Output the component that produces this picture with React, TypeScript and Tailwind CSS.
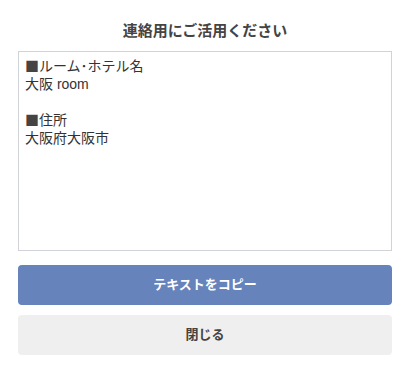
const Mark = () => (
  <span className="leading-none [font-family:'Noto_Sans_CJK_JP',sans-serif] text-[#444]">■</span>
);

export default function App() {
  return (
    <main className="min-h-screen bg-white px-[18px] pt-[20px] text-[#333] [font-family:'Liberation_Sans','Noto_Sans_CJK_JP',sans-serif]">
      <h2 className="text-center text-[15px] font-bold leading-[22px] text-[#444]">連絡用にご活用ください</h2>
      <div className="mt-[9px] h-[200px] w-full whitespace-pre-wrap border border-[#d0d3d8] px-[6px] pt-[5px] text-[14px] leading-[18px] text-[#333]">
        <div><Mark />ルーム･ホテル名</div>
        <div>大阪 room</div>
        <div>&nbsp;</div>
        <div><Mark />住所</div>
        <div>大阪府大阪市</div>
      </div>
      <button className="mt-[14px] flex h-[40px] w-full items-center justify-center rounded-[4px] bg-[#6683bb] text-[13px] font-bold text-white">
        テキストをコピー
      </button>
      <button className="mt-[10px] flex h-[40px] w-full items-center justify-center rounded-[4px] bg-[#efefef] text-[13px] font-bold text-[#444]">
        閉じる
      </button>
    </main>
  );
}
